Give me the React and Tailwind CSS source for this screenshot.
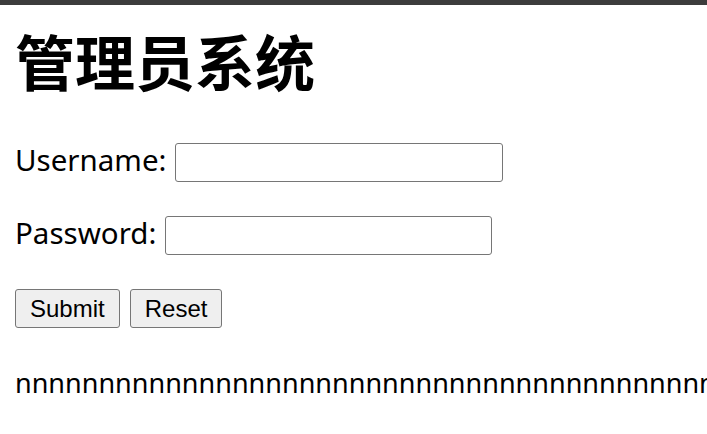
export default function App() {
  const ns = "n".repeat(60);
  return (
    <div className="w-[707px] h-[434px] overflow-hidden bg-white text-black">
      <div className="h-[5px] bg-[#3c3c3c]" />
      <div className="px-[15px]">
        <h1
          className="mt-[25px] text-[60px] leading-[60px] font-bold"
          style={{ fontFamily: '"Noto Sans CJK SC", sans-serif' }}
        >
          管理员系统
        </h1>
        <div
          className="mt-[53px] flex items-center gap-[9px] text-[29.5px]"
          style={{ fontFamily: '"Noto Sans", sans-serif' }}
        >
          <span className="leading-[39px] relative -top-[3px]">Username:</span>
          <input
            type="text"
            className="w-[328px] h-[39px] border border-[#767676] rounded-[3px] bg-white outline-none"
          />
        </div>
        <div
          className="mt-[34px] flex items-center gap-[9px] text-[29.5px]"
          style={{ fontFamily: '"Noto Sans", sans-serif' }}
        >
          <span className="leading-[39px] relative -top-[3px]">Password:</span>
          <input
            type="password"
            className="w-[327px] h-[39px] border border-[#767676] rounded-[3px] bg-white outline-none"
          />
        </div>
        <div
          className="mt-[34px] flex gap-[10px]"
          style={{ fontFamily: '"Liberation Sans", Arial, sans-serif' }}
        >
          <button className="h-[39px] px-[14px] text-[24px] leading-[27px] bg-[#efefef] border border-[#767676] rounded-[3px]">
            Submit
          </button>
          <button className="h-[39px] px-[14px] text-[24px] leading-[27px] bg-[#efefef] border border-[#767676] rounded-[3px]">
            Reset
          </button>
        </div>
        <p
          className="mt-[36px] text-[27px] leading-[38px] whitespace-nowrap"
          style={{ fontFamily: '"Noto Sans", sans-serif' }}
        >
          {ns}
        </p>
      </div>
    </div>
  );
}
